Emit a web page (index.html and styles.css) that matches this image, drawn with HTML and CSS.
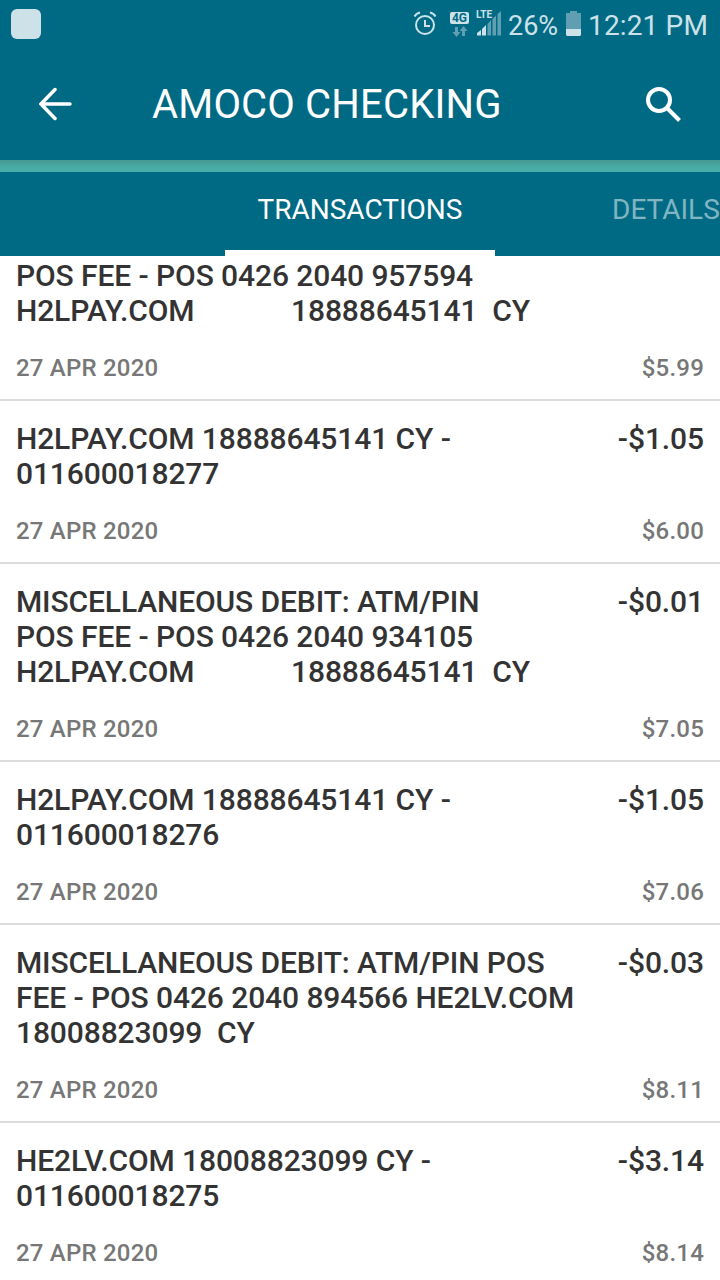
FILE: index.html
```html
<!DOCTYPE html>
<html lang="en">
  <head>
    <meta charset="utf-8">
    <title>AMOCO CHECKING</title>
    <link rel="stylesheet" href="styles.css">
  </head>
  <body>
    <div class="status">
      <span class="notification"></span>
      <svg class="alarm" width="24" height="28" viewBox="0 0 24 28">
        <circle cx="12" cy="15" r="9" />
        <path d="M12 10v6h5M1.500 6.500Q3 3.500 7 2.500M22.500 6.500Q21 3.500 17 2.500" />
      </svg>
      <div class="network">
        <span class="badge">4G</span>
        <svg width="18" height="12" viewBox="0 0 18 12">
          <path d="M5 1h3v5h2.500L6.500 11 2.500 6H5zM12 10h3V5h2.500L13.500 0 9.500 5H12z" />
        </svg>
      </div>
      <div class="signal">
        <svg width="26" height="26" viewBox="0 0 26 26">
          <path class="on" d="M1 24.500V22l4-3v5.500zM6 24.500V18l4-4v10.500z" />
          <path class="off" d="M11.500 24.500V13l3.500-4v15.500zM16.500 24.500V8L20 4.500v20zM21.500 24.500V3L25 0v24.500z" />
        </svg>
        <span class="lte">LTE</span>
      </div>
      <span class="percent">26%</span>
      <svg class="battery" width="16" height="26" viewBox="0 0 16 26">
        <path class="off" d="M4 0h7v2h4v17H0V2h4z" />
        <path class="on" d="M0 18h15v6l-1 1H1l-1-1z" />
      </svg>
      <span class="clock">12:21 PM</span>
    </div>

    <div class="header">
      <svg class="back" width="34" height="34" viewBox="0 0 34 34">
        <path d="M16 2.500L2 17L16 31.500M2 17H31" />
      </svg>
      <h1>AMOCO CHECKING</h1>
      <svg class="search" width="36" height="36" viewBox="0 0 36 36">
        <circle cx="14" cy="14" r="11" />
        <path d="M22.500 22.500L34.500 34.500" />
      </svg>
    </div>
    <div class="stripe"></div>

    <div class="tabs">
      <div class="tab active">TRANSACTIONS</div>
      <div class="tab">DETAILS</div>
    </div>

    <div class="list">
      <div class="item scrolled">
        <div class="name">POS FEE - POS 0426 2040 957594
H2LPAY.COM             18888645141  CY</div>
        <div class="date">27 APR 2020</div>
        <div class="balance">$5.99</div>
      </div>
      <div class="item">
        <div class="name">H2LPAY.COM 18888645141 CY -
011600018277</div>
        <div class="amount">-$1.05</div>
        <div class="date">27 APR 2020</div>
        <div class="balance">$6.00</div>
      </div>
      <div class="item">
        <div class="name">MISCELLANEOUS DEBIT: ATM/PIN
POS FEE - POS 0426 2040 934105
H2LPAY.COM             18888645141  CY</div>
        <div class="amount">-$0.01</div>
        <div class="date">27 APR 2020</div>
        <div class="balance">$7.05</div>
      </div>
      <div class="item">
        <div class="name">H2LPAY.COM 18888645141 CY -
011600018276</div>
        <div class="amount">-$1.05</div>
        <div class="date">27 APR 2020</div>
        <div class="balance">$7.06</div>
      </div>
      <div class="item">
        <div class="name">MISCELLANEOUS DEBIT: ATM/PIN POS
FEE - POS 0426 2040 894566 HE2LV.COM
18008823099  CY</div>
        <div class="amount">-$0.03</div>
        <div class="date">27 APR 2020</div>
        <div class="balance">$8.11</div>
      </div>
      <div class="item">
        <div class="name">HE2LV.COM 18008823099 CY -
011600018275</div>
        <div class="amount">-$3.14</div>
        <div class="date">27 APR 2020</div>
        <div class="balance">$8.14</div>
      </div>
    </div>
  </body>
</html>
```
FILE: styles.css
```css
* {
    box-sizing: border-box;
}

body {
    margin: 0;
    height: 1280px;
    overflow: hidden;
    display: flex;
    flex-direction: column;
    font-family: Roboto, sans-serif;
    background-color: #fff;
}

/* status bar */

.status {
    display: flex;
    flex: none;
    align-items: center;
    height: 48px;
    padding: 0 11px;
    color: #cce2e8;
    background-color: #006a85;
    font-size: 28px;
    line-height: 48px;
    white-space: nowrap;
}

.notification {
    width: 30px;
    height: 30px;
    margin-right: auto;
    border-radius: 6px;
    background-color: #cce2e8;
}

.alarm {
    margin-right: 13px;
    fill: none;
    stroke: #cce2e8;
    stroke-width: 2;
}

.network {
    display: flex;
    flex-direction: column;
    width: 19px;
    margin-right: 7px;
    padding-top: 1px;
}

.network svg {
    margin-top: 2px;
    fill: #5f9fb1;
}

.badge {
    height: 12px;
    border-radius: 2px;
    color: #006a85;
    background-color: #cce2e8;
    font-size: 12px;
    font-weight: bold;
    line-height: 12px;
    text-align: center;
}

.signal {
    position: relative;
    height: 26px;
    margin-right: 6px;
}

.signal svg {
    display: block;
}

.lte {
    position: absolute;
    top: -2px;
    left: 0;
    font-size: 10px;
    font-weight: bold;
    line-height: 12px;
}

.on {
    fill: #cce2e8;
}

.off {
    fill: #5f9fb1;
}

.percent {
    width: 49px;
    margin-right: 9px;
    padding-top: 4px;
    font-size: 27px;
    line-height: 44px;
}

.battery {
    margin-right: 6px;
}

.clock {
    width: 121px;
    padding-top: 4px;
    line-height: 44px;
    letter-spacing: 0.15px;
}

/* title */

.header {
    display: flex;
    flex: none;
    align-items: center;
    height: 112px;
    padding: 0 39px;
    color: #fff;
    background-color: #006a85;
}

.header svg {
    flex: none;
    fill: none;
    stroke: #fff;
}

.back {
    stroke-width: 3.5;
    stroke-linecap: round;
}

.search {
    stroke-width: 4;
}

h1 {
    flex: 1;
    margin: 0 0 0 79px;
    font-size: 40px;
    font-weight: normal;
    letter-spacing: 0.18px;
    white-space: nowrap;
}

.stripe {
    flex: none;
    height: 12px;
    background: linear-gradient(#459990, #49aba5 60%, #4aaea8);
}

/* tabs */

.tabs {
    display: flex;
    flex: none;
    height: 84px;
    padding-left: 225px;
    overflow: hidden;
    color: #80b5c2;
    background-color: #006a85;
    font-size: 28px;
    line-height: 76px;
}

.tab {
    flex: none;
    width: 270px;
    padding-left: 117px;
}

.tab.active {
    padding-left: 0;
    border-bottom: 6px solid #fff;
    color: #fff;
    text-align: center;
}

/* transactions */

.item {
    display: grid;
    grid-template-columns: 1fr auto;
    row-gap: 26px;
    padding: 20px 16px 17px;
    border-bottom: 2px solid #dcdcdc;
    color: #333;
    font-size: 30px;
    font-weight: 500;
    line-height: 35px;
}

.item.scrolled {
    padding-top: 2px;
}

.name {
    grid-column: 1;
    letter-spacing: -0.12px;
    word-spacing: 0.1px;
    white-space: pre;
}

.date, .balance {
    color: #777;
    font-size: 24px;
    line-height: 28px;
    letter-spacing: 0.2px;
}

.date {
    grid-column: 1;
}

.amount, .balance {
    grid-column: 2;
    text-align: right;
}

.amount {
    letter-spacing: -0.1px;
}
```
